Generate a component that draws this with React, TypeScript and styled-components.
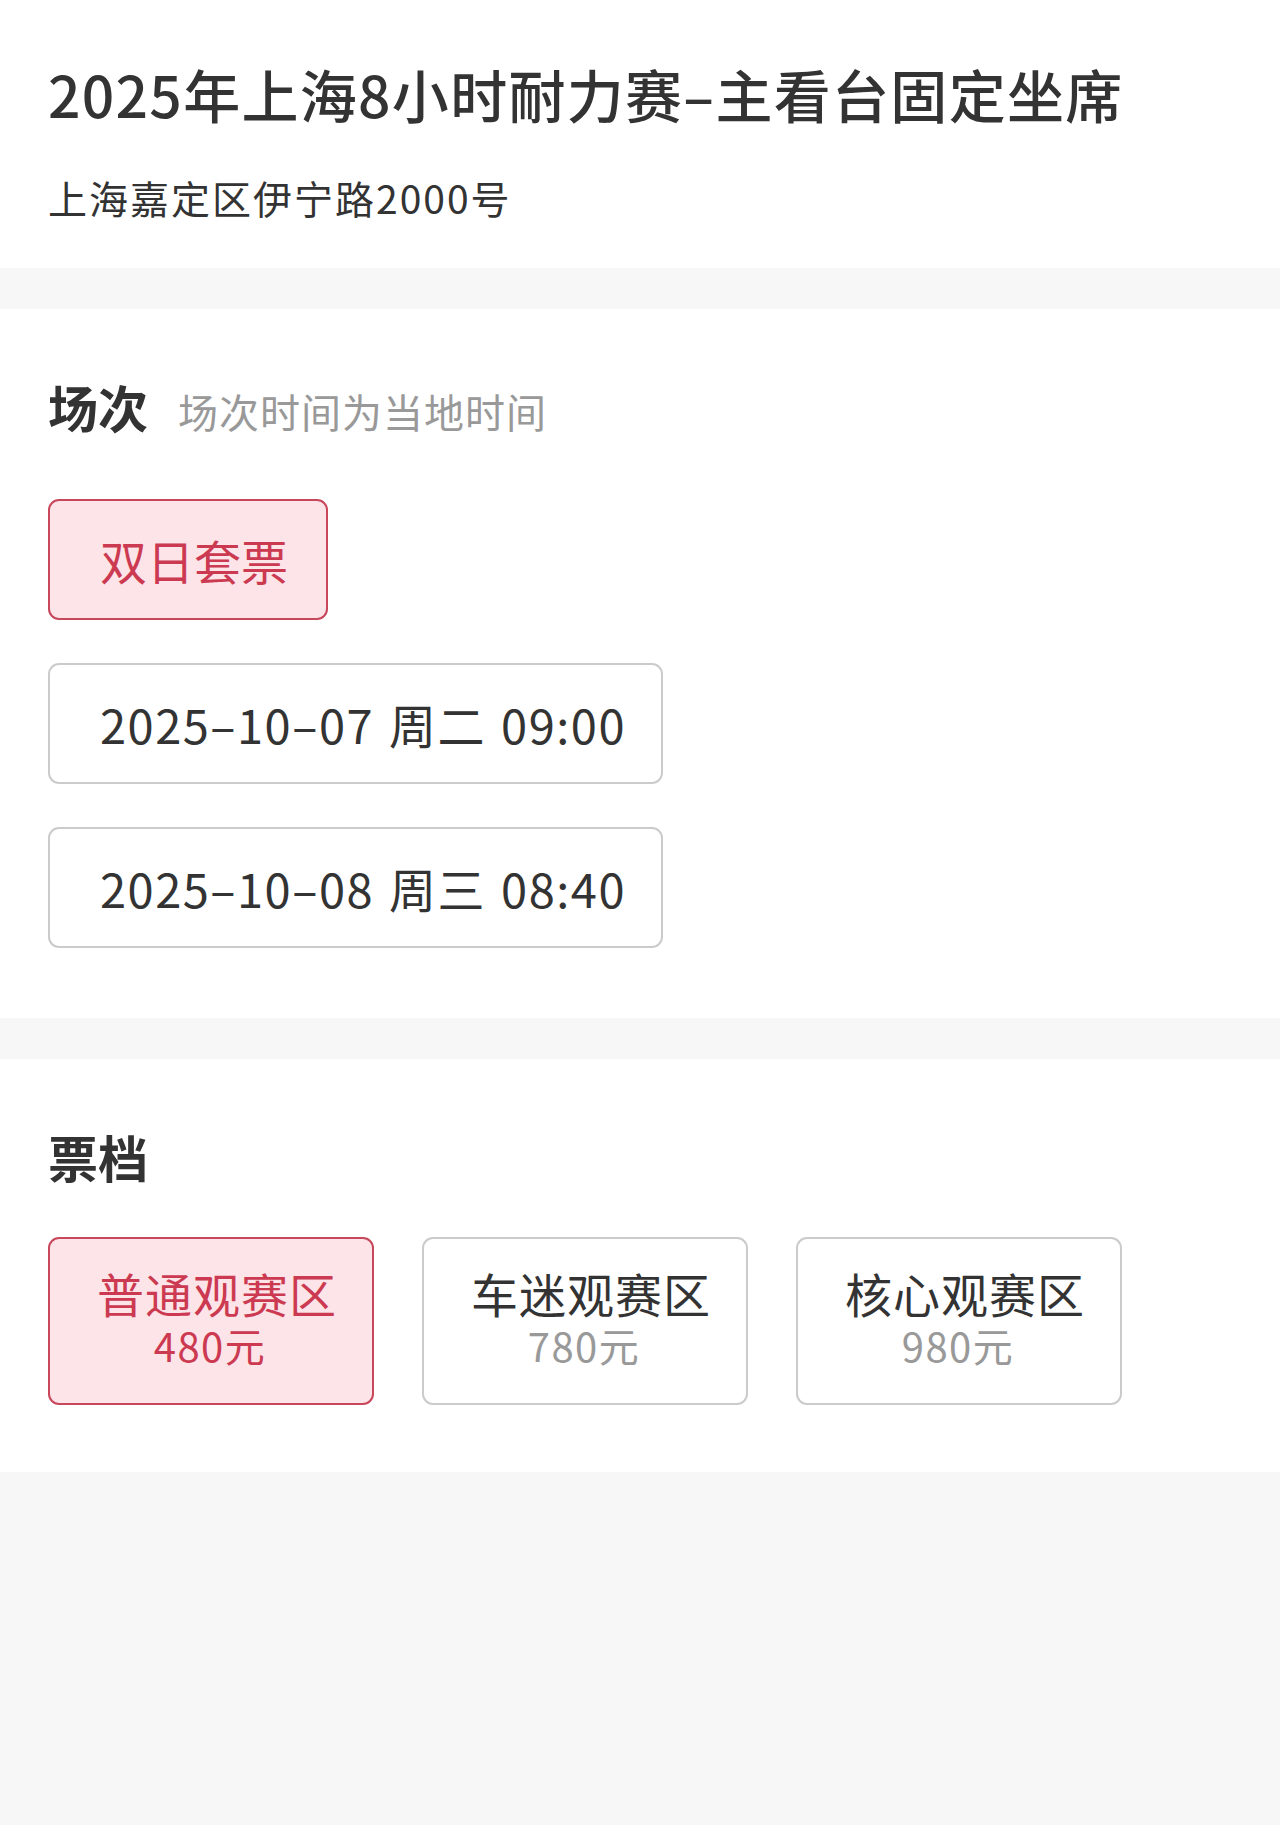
import React from "react";
import styled, { createGlobalStyle } from "styled-components";

const GlobalStyle = createGlobalStyle`
    html, body {
        margin: 0;
        padding: 0;
        background: #f7f7f7;
    }
    body {
        font-family: "Noto Sans CJK SC", "Noto Sans", sans-serif;
        color: #333;
    }
`;

const Page = styled.div`
        min-height: 1825px;
        background: #f7f7f7;
        display: flex;
        flex-direction: column;
    `;

const Section = styled.section<{ $pt: number; $pb: number }>`
        background: #fff;
        padding: ${(p) => p.$pt}px 49px ${(p) => p.$pb}px 48px;
        margin-bottom: 41px;
        display: flex;
        flex-direction: column;
    `;

const Title = styled.h1`
        margin: 0;
        font-size: 57px;
        line-height: 66px;
        font-weight: 500;
        color: #333;
        letter-spacing: 1.3px;
    `;

const Address = styled.div`
        margin-top: 48px;
        font-size: 39px;
        line-height: 46px;
        color: #333;
        letter-spacing: 2px;
    `;

const HeadRow = styled.div<{ $mb: number }>`
        display: flex;
        align-items: baseline;
        gap: 30px;
        margin-bottom: ${(p) => p.$mb}px;
    `;

const Heading = styled.h2`
        margin: 0;
        font-size: 50px;
        line-height: 58px;
        font-weight: 700;
        color: #333;
    `;

const HeadNote = styled.span`
        font-size: 40px;
        line-height: 58px;
        color: #999;
        letter-spacing: 1px;
    `;

const SessionList = styled.div`
        display: flex;
        flex-direction: column;
        align-items: flex-start;
        gap: 43px;
    `;

const Chip = styled.div<{ $active?: boolean; $spaced?: boolean }>`
        box-sizing: border-box;
        height: 121px;
        display: inline-flex;
        align-items: center;
        padding: 0 ${(p) => (p.$spaced ? 35 : 38)}px 0 50px;
        border: 2px solid ${(p) => (p.$active ? "#c8475b" : "#cbcbcb")};
        border-radius: 11px;
        background: ${(p) => (p.$active ? "#fde4e8" : "#fff")};
        color: ${(p) => (p.$active ? "#cc3a52" : "#333")};
        font-size: 47px;
        line-height: 1;
        letter-spacing: ${(p) => (p.$spaced ? "1.5px" : "0")};
        word-spacing: ${(p) => (p.$spaced ? "3px" : "0")};
        white-space: nowrap;
    `;

const TicketGrid = styled.div`
        display: grid;
        grid-template-columns: repeat(3, 326px);
        gap: 48px;
    `;

const TicketCard = styled.div<{ $active?: boolean }>`
        box-sizing: border-box;
        height: 168px;
        display: flex;
        flex-direction: column;
        align-items: center;
        gap: 5px;
        padding-top: 29px;
        border: 2px solid ${(p) => (p.$active ? "#c8475b" : "#cbcbcb")};
        border-radius: 11px;
        background: ${(p) => (p.$active ? "#fde4e8" : "#fff")};
    `;

const TicketName = styled.div<{ $active?: boolean }>`
        padding-left: 12px;
        font-size: 47px;
        line-height: 50px;
        letter-spacing: 1px;
        color: ${(p) => (p.$active ? "#cc3a52" : "#333")};
    `;

const TicketPrice = styled.div<{ $active?: boolean }>`
        padding-right: 2px;
        font-size: 40px;
        line-height: 44px;
        letter-spacing: 1.5px;
        color: ${(p) => (p.$active ? "#cc3a52" : "#999")};
    `;

const sessions = [
    { label: "双日套票", active: true },
    { label: "2025–10–07 周二 09:00", spaced: true },
    { label: "2025–10–08 周三 08:40", spaced: true },
];

const tickets = [
    { name: "普通观赛区", price: "480元", active: true },
    { name: "车迷观赛区", price: "780元" },
    { name: "核心观赛区", price: "980元" },
];

export default function App() {
    return (
        <Page>
            <GlobalStyle />
            <Section $pt={60} $pb={48}>
                <Title>2025年上海8小时耐力赛–主看台固定坐席</Title>
                <Address>上海嘉定区伊宁路2000号</Address>
            </Section>

            <Section $pt={68} $pb={70}>
                <HeadRow $mb={59}>
                    <Heading>场次</Heading>
                    <HeadNote>场次时间为当地时间</HeadNote>
                </HeadRow>
                <SessionList>
                    {sessions.map((s) => (
                        <Chip key={s.label} $active={s.active} $spaced={s.spaced}>
                            {s.label}
                        </Chip>
                    ))}
                </SessionList>
            </Section>

            <Section $pt={68} $pb={67}>
                <HeadRow $mb={52}>
                    <Heading>票档</Heading>
                </HeadRow>
                <TicketGrid>
                    {tickets.map((t) => (
                        <TicketCard key={t.name} $active={t.active}>
                            <TicketName $active={t.active}>{t.name}</TicketName>
                            <TicketPrice $active={t.active}>{t.price}</TicketPrice>
                        </TicketCard>
                    ))}
                </TicketGrid>
            </Section>
        </Page>
    );
}
